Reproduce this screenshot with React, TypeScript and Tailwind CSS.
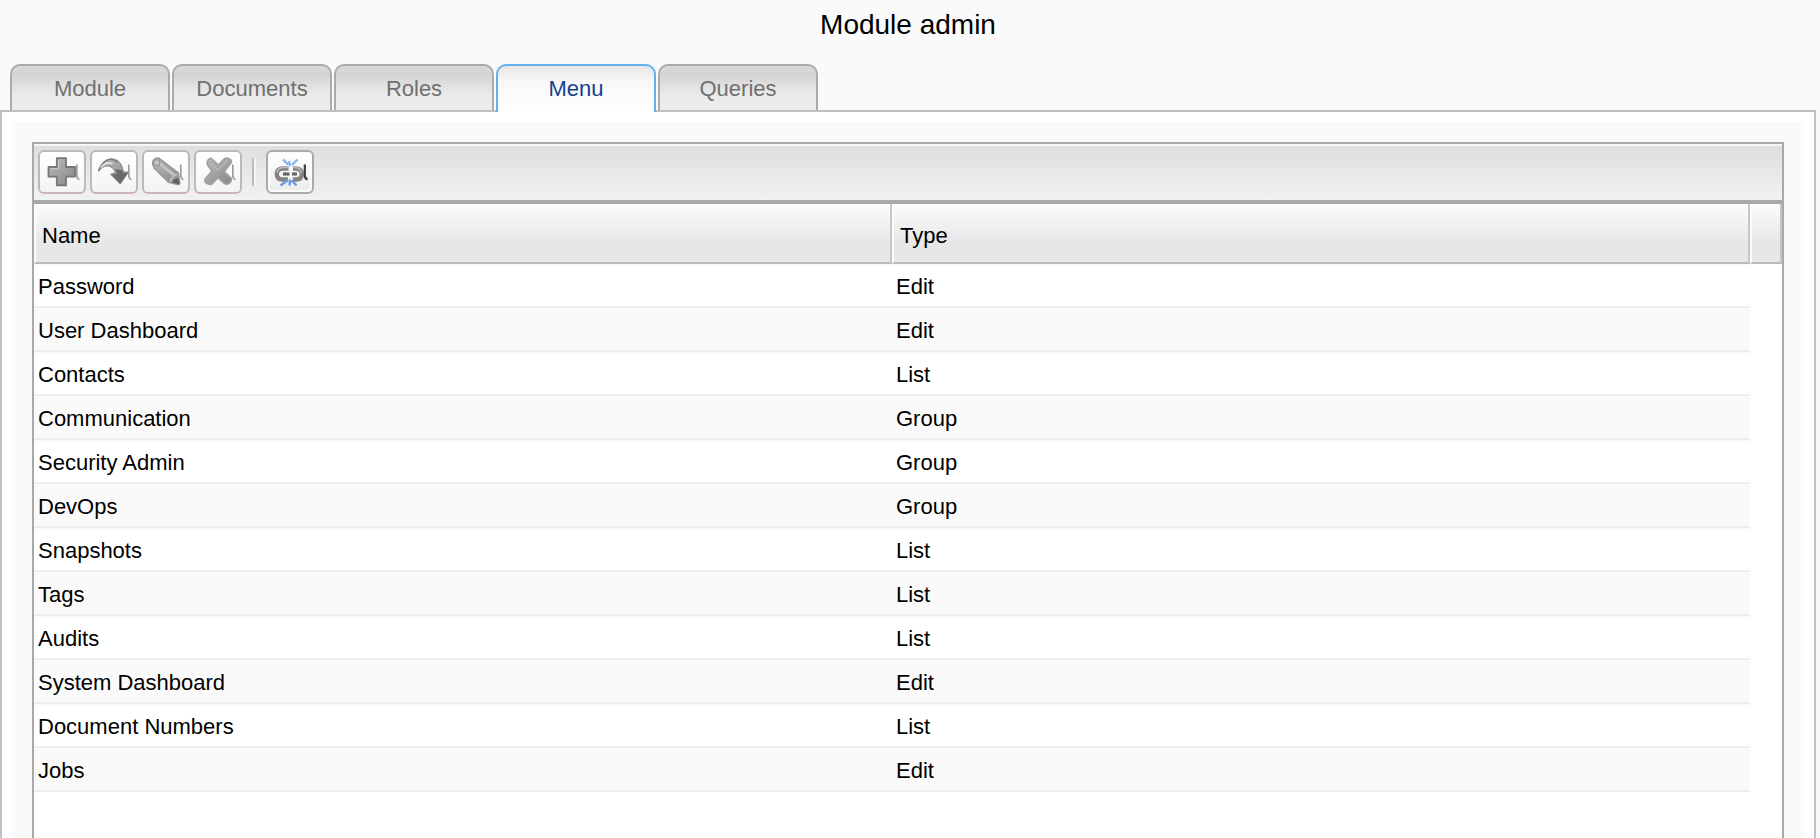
import { useState } from 'react';
import type { ReactNode } from 'react';

interface MenuEntry {
  name: string;
  type: 'Edit' | 'List' | 'Group';
}

const TABS = ['Module', 'Documents', 'Roles', 'Menu', 'Queries'];

const ENTRIES: MenuEntry[] = [
  { name: 'Password', type: 'Edit' },
  { name: 'User Dashboard', type: 'Edit' },
  { name: 'Contacts', type: 'List' },
  { name: 'Communication', type: 'Group' },
  { name: 'Security Admin', type: 'Group' },
  { name: 'DevOps', type: 'Group' },
  { name: 'Snapshots', type: 'List' },
  { name: 'Tags', type: 'List' },
  { name: 'Audits', type: 'List' },
  { name: 'System Dashboard', type: 'Edit' },
  { name: 'Document Numbers', type: 'List' },
  { name: 'Jobs', type: 'Edit' },
];

interface ToolButtonProps {
  label: string;
  disabled?: boolean;
  children: ReactNode;
}

function ToolButton({ label, disabled = false, children }: ToolButtonProps) {
  return (
    <button
      type="button"
      aria-label={label}
      disabled={disabled}
      className={`flex h-11 w-12 items-center justify-end rounded-md border-2 pr-1 ${
        disabled
          ? 'border-[#bababa] border-b-[#cdb5b5] bg-linear-to-b from-white to-[#f4f4f4]'
          : 'border-[#aaaaaa] bg-linear-to-b from-white to-[#ececec] shadow-[inset_0_0_0_2px_#fbfbfb]'
      }`}
    >
      <svg width="32" height="32" viewBox="0 0 32 32" fill="none" className="shrink-0 overflow-visible" aria-hidden="true">
        {children}
        <path
          d="M28.8 8.5V19.5Q28.8 22.5 31.5 23.5"
          stroke={disabled ? '#999999' : '#3c3c3c'}
          strokeWidth={disabled ? 1.6 : 2.2}
        />
      </svg>
    </button>
  );
}

function AddIcon() {
  return (
    <>
      <path d="M8.8 2.2H18V11H27V20.6H18V29.4H8.8V20.6H0.5V11H8.8Z" fill="url(#metal)" stroke="#777777" strokeWidth="1.8" strokeLinejoin="round" />
      <path d="M10.6 4V12.7H2.3" stroke="#c9c9c9" strokeWidth="1" />
    </>
  );
}

function InsertIcon() {
  return (
    <>
      <path
        d="M-1.5 15.5C1 8.5 5 3.2 11 3C17.5 2.8 22 6.5 23.3 16H28.5L20.3 28L10.5 18.2L15.5 17C14 12.5 11 10 7 10C3.5 10 0.5 12.5 -1.5 15.5Z"
        fill="url(#metal)"
        stroke="#828282"
        strokeWidth="1"
        strokeLinejoin="round"
      />
      <path d="M15.5 13L22.5 14.5L23 17H27.5L20.3 27.5L11.8 18.8L17 18Z" fill="#6a6a6a" />
      <path d="M-1.5 14.5C1.5 7.8 5.5 3.5 10.5 3.3C13 3.2 15.5 4.2 17.5 6" stroke="#7d7d7d" strokeWidth="1.4" />
      <path d="M1 11.5C4.5 7.2 8.5 6.2 12.5 7.7" stroke="#dedede" strokeWidth="1.8" />
    </>
  );
}

function EditIcon() {
  return (
    <>
      <path
        d="M1 9C-0.3 5 2.8 1.2 7 2.3L26.3 16.8L27.8 27Q27.5 28.8 25.5 28.4L16.5 26.3L2.3 12.3Z"
        fill="url(#metal)"
        stroke="#979797"
        strokeWidth="1.5"
        strokeLinejoin="round"
      />
      <path d="M7.5 7.5L22.5 19.5" stroke="#c2c2c2" strokeWidth="3" />
      <ellipse cx="4.7" cy="6.7" rx="3" ry="3" fill="#c6c6c6" stroke="#969696" strokeWidth="1.1" />
      <path d="M25.3 18L20.5 21L18 25.5" stroke="#bcbcbc" strokeWidth="1.8" />
      <path d="M20.5 26.5L22 23.5L26.3 22L27.6 28.4Z" fill="#606060" />
    </>
  );
}

function DeleteIcon() {
  return (
    <>
      <path
        d="M7.5 2.5L14.5 9L20.5 2.5Q23.5 1 27 3.8Q28 5.5 26.8 7.3L20.3 15.5L27 22Q28.3 25 25 27.6Q22.3 29 20 27.2L13.8 21.7L8.3 27.7Q5.5 29.4 1.8 26.8Q-0.2 24.3 2 21.7L8 15L3.8 9.5Q2.3 6 4.2 3.7Q5.8 1.9 7.5 2.5Z"
        fill="url(#metal)"
        stroke="#a2a2a2"
        strokeWidth="1.6"
        strokeLinejoin="round"
      />
      <path d="M5.8 6L13.8 13.8L24 4.3" stroke="#b4b4b4" strokeWidth="1.8" strokeLinejoin="round" />
    </>
  );
}

function UnlinkIcon() {
  return (
    <>
      <path d="M12.5 12.5H6.5Q0.8 13 0.8 18.2Q0.8 23.3 6.5 23.5H12" stroke="#848484" strokeWidth="4.4" />
      <path d="M12 11.5H6.5Q1.3 12.2 1.2 17" stroke="#bdbdbd" strokeWidth="1.4" />
      <path d="M7 18H13.5" stroke="#666666" strokeWidth="3.2" />
      <path d="M17 12.5H20Q25.8 13 25.8 18.2Q25.8 23.3 20 23.5H17" stroke="#848484" strokeWidth="4.4" />
      <path d="M17.5 11.5H20Q25 12.2 25.3 17" stroke="#bdbdbd" strokeWidth="1.4" />
      <path d="M16 18H21" stroke="#666666" strokeWidth="3.2" />
      <path d="M7 3.5L12 8.5M13 5L14 10M21.5 3.5L15.8 9" stroke="#80b3f2" strokeWidth="2.2" />
      <path d="M4.5 29.5L12 24M13.5 29.5L14.3 23.5M20.5 29.5L15.8 24.5" stroke="#6b98e6" strokeWidth="2.4" />
    </>
  );
}

export default function App() {
  const [active, setActive] = useState('Menu');

  return (
    <div className="flex h-screen flex-col overflow-hidden bg-[#fafafa] pr-1 font-['Liberation_Sans',Arial,sans-serif] text-[22px] leading-[26px] text-black">
      {/* Shared gradient for the toolbar icons */}
      <svg width="0" height="0" className="absolute" aria-hidden="true">
        <defs>
          <linearGradient id="metal" x1="0" y1="0" x2="1" y2="1">
            <stop offset="0" stopColor="#bcbcbc" />
            <stop offset="1" stopColor="#868686" />
          </linearGradient>
        </defs>
      </svg>

      <h1 className="flex h-16 shrink-0 justify-center pt-2 text-[28px] leading-[34px]">Module admin</h1>

      {/* Tabs */}
      <div role="tablist" className="relative z-10 -mb-0.5 flex shrink-0 gap-0.5 px-2.5">
        {TABS.map((tab) => (
          <button
            key={tab}
            type="button"
            role="tab"
            aria-selected={tab === active}
            onClick={() => setActive(tab)}
            className={`w-40 rounded-t-[10px] border-2 border-b-0 pt-0.5 ${
              tab === active
                ? 'h-12 border-[#65b0ea] bg-linear-to-b from-[#e6e6e6] via-[#f8f8f8] via-35% to-white pb-0.5 text-[#15428b]'
                : 'h-[46px] border-[#aaaaaa] bg-linear-to-b from-[#d9d9d9] via-[#d4d4d4] via-20% to-[#ebebeb] to-65% text-[#707070]'
            }`}
          >
            {tab}
          </button>
        ))}
      </div>

      {/* Tab panel */}
      <div role="tabpanel" className="flex min-h-0 flex-1 flex-col border-2 border-b-0 border-[#bfc0c2] bg-white px-2.5 pt-2.5">
        <div className="flex min-h-0 flex-1 flex-col bg-[#fafafa] px-5 pt-5">
          <div className="flex min-h-0 flex-1 flex-col border-2 border-b-0 border-[#a9a9a9] bg-white">
            {/* Toolbar */}
            <div className="flex h-15 shrink-0 items-start gap-1 border-t-2 border-b-4 border-t-[#fbf5f5] border-b-[#a9a9a9] bg-linear-to-b from-[#dedede] to-[#f2f2f2] px-1 pt-1">
              <ToolButton label="Add" disabled><AddIcon /></ToolButton>
              <ToolButton label="Insert" disabled><InsertIcon /></ToolButton>
              <ToolButton label="Edit" disabled><EditIcon /></ToolButton>
              <ToolButton label="Delete" disabled><DeleteIcon /></ToolButton>
              <div className="mx-1.5 mt-2 h-7 w-1 border-r-2 border-l-2 border-r-[#f4f4f4] border-l-[#bcbcbc]" />
              <ToolButton label="Unlink"><UnlinkIcon /></ToolButton>
            </div>

            {/* Grid */}
            <table className="w-full table-fixed border-separate border-spacing-0 text-left">
              <colgroup>
                <col />
                <col />
                <col className="w-8" />
              </colgroup>
              <thead>
                <tr className="h-15">
                  {['Name', 'Type', ''].map((title) => (
                    <th
                      key={title}
                      scope="col"
                      className="border-2 border-t-0 border-r-[#c6c6c6] border-b-[#b9b9b9] border-l-[#fbfbfb] bg-linear-to-b from-[#fcfcfc] via-[#e7e7e7] via-65% to-[#e7e7e7] px-1.5 pt-1.5 font-normal"
                    >
                      {title}
                    </th>
                  ))}
                </tr>
              </thead>
              <tbody>
                {ENTRIES.map((entry, index) => {
                  const cell = `border-t-2 border-b-2 border-t-[#fafafa] border-b-[#eeeeee] px-1 pt-0.5 ${index % 2 ? 'bg-[#fafafa]' : 'bg-white'}`;
                  return (
                    <tr key={entry.name} className="h-11">
                      <td className={cell}>{entry.name}</td>
                      <td className={cell}>{entry.type}</td>
                    </tr>
                  );
                })}
              </tbody>
            </table>
          </div>
        </div>
      </div>
    </div>
  );
}
